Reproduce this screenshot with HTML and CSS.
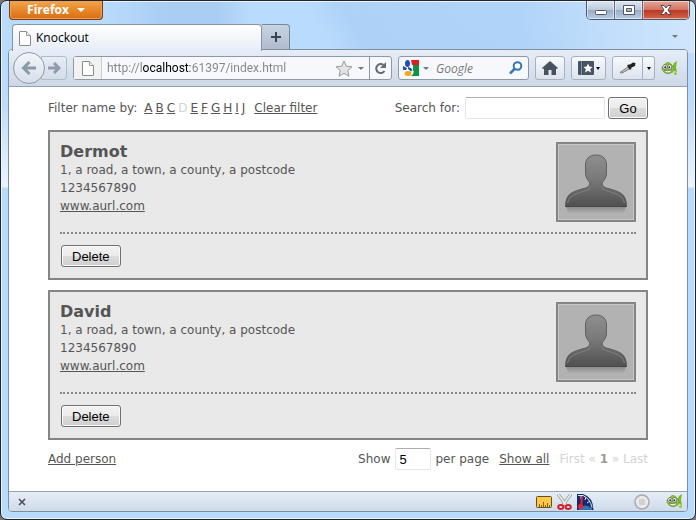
FILE: index.html
```
<!DOCTYPE html>
<html lang="en">
<head>
  <meta charset="utf-8">
  <title>Knockout</title>
  <link rel="stylesheet" href="styles.css">
</head>
<body>
  <!-- shared icons -->
  <svg class="defs" width="0" height="0">
    <defs>
      <linearGradient id="bodyFill" x1="0" y1="0" x2="0" y2="1">
        <stop offset="0" stop-color="#8f8f8f" />
        <stop offset="0.5" stop-color="#777" />
        <stop offset="1" stop-color="#505050" />
      </linearGradient>
      <linearGradient id="shadowFill" x1="0" y1="0" x2="0" y2="1">
        <stop offset="0" stop-color="#8c8c8c" />
        <stop offset="1" stop-color="#b2b2b2" />
      </linearGradient>
      <symbol id="page" viewBox="0 0 12 15">
        <path d="M1 .5h6.500l4 4V14q0 .5-.5.5H1q-.5 0-.5-.5V1q0-.5.5-.5z" fill="#fdfdfd" stroke="#8b8b8b" />
        <path d="M7.500.5v4h4" fill="#eee" stroke="#999" />
      </symbol>
      <symbol id="fish" viewBox="0 0 17 17">
        <path d="M11 7l2-4 3-2-1 6 1 5-3-1-2-2z" fill="#7cb82b" />
        <path d="M3 5q3-4 6-2l2 2q3 3 1 7-4 3-8 1-4-3-3-6z" fill="#8ecb35" stroke="#659c25" stroke-width=".6" />
        <path d="M3 10q4 2 8-.5Q10 13 7 13q-3 0-4-3z" fill="#fff" stroke="#4b6b2b" stroke-width=".6" />
        <circle cx="4" cy="7" r="2.300" fill="#fff" stroke="#555" stroke-width=".7" />
        <circle cx="8.500" cy="7" r="2.300" fill="#fff" stroke="#555" stroke-width=".7" />
        <circle cx="4.200" cy="7.200" r="1" fill="#222" />
        <circle cx="8.300" cy="7.200" r="1" fill="#222" />
        <circle cx="14.500" cy="13.500" r="1.500" fill="#8ecb35" />
      </symbol>
      <symbol id="person" viewBox="0 0 76 76">
        <path d="M8 63h60l-3 7H11z" fill="url(#shadowFill)" />
        <path d="M38 11c7 0 10.500 4 10.500 10v8c0 4-2 7-4 9-1 3 1 5 4 6 9 2.500 15 4 18 9 1.500 3 2 6 2 9.500H7.500c0-3.500.5-6.500 2-9.500 3-5 9-6.500 18-9 3-1 5-3 4-6-2-2-4-5-4-9v-8c0-6 3.500-10 10.500-10z" fill="url(#bodyFill)" stroke="#5f5f5f" />
        <path d="M9.500 59q1-5 6-8 6-3 13-4.500 3-1 4-3m11 0q1 2 4 3 7 1.500 13 4.500 5 3 6 8" fill="none" stroke="#808080" />
        <path d="M7 62.500h62" stroke="#484848" />
      </symbol>
    </defs>
  </svg>

  <div class="window">
    <div class="titlebar">
      <button class="firefox" type="button">Firefox <span class="caret caret-white"></span></button>
      <div class="window-buttons">
        <button class="win-btn" type="button" aria-label="Minimize">
          <svg width="14" height="14" viewBox="0 0 14 14"><rect x="1.500" y="7.500" width="11" height="4" rx="1" fill="#fff" stroke="#535666" /></svg>
        </button>
        <button class="win-btn" type="button" aria-label="Maximize">
          <svg width="14" height="14" viewBox="0 0 14 14"><path d="M1.500 2.500h11v9h-11zM4.500 5.500v3h5v-3z" fill="#fff" fill-rule="evenodd" stroke="#535666" /></svg>
        </button>
        <button class="win-btn win-close" type="button" aria-label="Close">
          <svg width="14" height="14" viewBox="0 0 14 14"><path d="M2 2.500h3l2 2.500 2-2.500h3L9 7l3 4.500H9L7 9l-2 2.500H2L5 7z" fill="#fff" stroke="#5b4650" /></svg>
        </button>
      </div>
    </div>

    <div class="tabs">
      <button class="tab" type="button"><svg width="12" height="15"><use href="#page" /></svg>Knockout</button>
      <button class="new-tab" type="button" aria-label="New tab">
        <svg width="10" height="10" viewBox="0 0 10 10"><path d="M5 0v10M0 5h10" stroke="#3b4450" stroke-width="2" /></svg>
      </button>
      <span class="caret tabs-caret"></span>
    </div>

    <div class="chrome">
      <div class="toolbar">
        <div class="nav">
          <button class="back" type="button" aria-label="Back">
            <svg width="16" height="14" viewBox="0 0 16 14"><path d="M8.500 1L2.500 7l6 6M3 7h12" fill="none" stroke="#8c99ab" stroke-width="3" /></svg>
          </button>
          <button class="forward" type="button" aria-label="Forward">
            <svg width="13" height="12" viewBox="0 0 13 12"><path d="M6 1l5 5-5 5M11 6H0" fill="none" stroke="#8f9cae" stroke-width="3" /></svg>
          </button>
        </div>

        <div class="field location">
          <span class="site"><svg width="12" height="15"><use href="#page" /></svg></span>
          <input class="url" type="text" aria-label="Address" value="http://localhost:61397/index.html">
          <svg width="18" height="17" viewBox="0 0 18 17"><path d="M9 1l2.300 5.200 5.700.6-4.200 3.800 1.200 5.600L9 13.300l-5 2.900 1.200-5.600L1 6.800l5.700-.6z" fill="#e4e4e6" stroke="#999" /></svg>
          <span class="caret"></span>
          <button class="reload" type="button" aria-label="Reload">
            <svg width="13" height="13" viewBox="0 0 13 13"><path d="M9.500 3A4.500 4.500 0 1 0 10.500 9" fill="none" stroke="#666c75" stroke-width="2" /><path d="M12 0v6H6z" fill="#666c75" /></svg>
          </button>
        </div>

        <div class="field search">
          <svg width="16" height="16" viewBox="0 0 16 16">
            <rect width="16" height="16" fill="#fff" />
            <path d="M8 0h8v5H9z" fill="#e11b22" />
            <path d="M10 5h6v11H8q4-3 2-6z" fill="#0b9444" />
            <path d="M0 6l4 2-1 2H0z" fill="#1d4fb4" />
            <ellipse cx="4.500" cy="3.500" rx="2.500" ry="3.500" fill="#1d4fb4" />
            <path d="M5 7l3 1q2 2 0 3.500L5 9z" fill="#1d4fb4" />
            <ellipse cx="5" cy="13.500" rx="3.500" ry="2.500" fill="#f5a81c" />
          </svg>
          <span class="caret"></span>
          <input class="engine" type="text" placeholder="Google" aria-label="Web search">
          <svg width="14" height="14" viewBox="0 0 14 14"><circle cx="8.500" cy="5" r="3.800" fill="#fff" stroke="#3677b5" stroke-width="2" /><path d="M5.500 8L1 12.500" stroke="#3677b5" stroke-width="2.500" /></svg>
        </div>

        <button class="tool" type="button" aria-label="Home">
          <svg width="16" height="14" viewBox="0 0 16 14"><path d="M8 0l8 7-1 1-1-.5V14H9.500V9h-3v5H2V7.500L1 8 0 7z" fill="#46525f" /></svg>
        </button>
        <button class="tool bookmarks" type="button" aria-label="Bookmarks">
          <svg width="16" height="14" viewBox="0 0 16 14"><rect width="16" height="14" rx="1" fill="#465563" /><path d="M3.500 0v14" stroke="#8591a0" /><path d="M10 2.500l1.400 3 3.200.4-2.400 2.200.7 3.300L10 9.800l-2.900 1.600.7-3.300-2.400-2.200 3.200-.4z" fill="#fff" /></svg>
          <span class="caret caret-small"></span>
        </button>
        <div class="split">
          <button class="tool picker" type="button" aria-label="Color picker">
            <svg width="17" height="12" viewBox="0 0 17 12"><path d="M1 10.500L9 5l2 1.500L3 11z" fill="#ccc" stroke="#777" /><path d="M8 3.500l1.500-1 1.500 0 3-2 2.500.5-.5 3-3.500 1.500-.5 2h-1.500z" fill="#222" /></svg>
          </button>
          <button class="tool more" type="button" aria-label="Color picker menu"><span class="caret caret-small"></span></button>
        </div>
        <svg width="17" height="17"><use href="#fish" /></svg>
      </div>

      <main class="page">
        <div class="filters">
          <div class="letters">
            <span class="letters-label">Filter name by:</span>
            <a href="#">A</a>
            <a href="#">B</a>
            <a href="#">C</a>
            <span class="disabled">D</span>
            <a href="#">E</a>
            <a href="#">F</a>
            <a href="#">G</a>
            <a href="#">H</a>
            <a href="#">I</a>
            <a href="#">J</a>
            <a class="clear" href="#">Clear filter</a>
          </div>
          <form class="search-form">
            <label for="term">Search for:</label>
            <input class="box term" type="text" id="term">
            <button class="btn" type="button">Go</button>
          </form>
        </div>

        <ul class="people">
          <li class="person">
            <div class="details">
              <div>
                <h2>Dermot</h2>
                <p>1, a road, a town, a county, a postcode</p>
                <p>1234567890</p>
                <p><a href="#">www.aurl.com</a></p>
              </div>
              <svg class="photo" viewBox="0 0 76 76"><use href="#person" /></svg>
            </div>
            <div class="tools"><button class="btn" type="button">Delete</button></div>
          </li>
          <li class="person">
            <div class="details">
              <div>
                <h2>David</h2>
                <p>1, a road, a town, a county, a postcode</p>
                <p>1234567890</p>
                <p><a href="#">www.aurl.com</a></p>
              </div>
              <svg class="photo" viewBox="0 0 76 76"><use href="#person" /></svg>
            </div>
            <div class="tools"><button class="btn" type="button">Delete</button></div>
          </li>
        </ul>

        <div class="paging">
          <a class="add" href="#">Add person</a>
          <label for="count">Show</label>
          <input class="box count" type="text" id="count" value="5">
          <span>per page</span>
          <a class="all" href="#">Show all</a>
          <div class="pages">First « <b>1</b> » Last</div>
        </div>
      </main>

      <div class="statusbar">
        <button class="close-bar" type="button" aria-label="Close bar">
          <svg width="8" height="8" viewBox="0 0 8 8"><path d="M1 1l6 6M7 1L1 7" stroke="#4a4d57" stroke-width="1.600" /></svg>
        </button>
        <svg width="16" height="12" viewBox="0 0 16 12"><rect x=".5" y=".5" width="15" height="11" rx="1" fill="#fbc94a" stroke="#6d4d10" /><path d="M3.500 11V8M5.500 11V9M7.500 11V6M9.500 11V9M11.500 11V7M13.500 11V9" stroke="#8a5f10" /></svg>
        <svg width="15" height="16" viewBox="0 0 15 16"><path d="M1 0l8 11M14 0L6 11" stroke="#999" stroke-width="3" /><path d="M1 0l8 11M14 0L6 11" stroke="#eee" stroke-width="1.500" /><ellipse cx="3.800" cy="13" rx="2.600" ry="2" fill="none" stroke="#d1222b" stroke-width="2" /><ellipse cx="11.200" cy="13" rx="2.600" ry="2" fill="none" stroke="#d1222b" stroke-width="2" /></svg>
        <svg width="17" height="16" viewBox="0 0 17 16"><path d="M0 0h6q10 3 10.500 16H0z" fill="#16296f" /><path d="M2 14q6-5 13 0v2H2z" fill="#2f78ad" /><path d="M1 1.500h5q7 3 9 12M4 2v3M9 3L8 6M13 7l-3 2" fill="none" stroke="#dfe6f5" /><path d="M5 3l-1 11" stroke="#e8232a" stroke-width="2" /><circle cx="3.500" cy="12.500" r="2.500" fill="#e8232a" /></svg>
        <svg class="stop" width="16" height="16" viewBox="0 0 16 16"><circle cx="8" cy="8" r="7" fill="#e8e9eb" stroke="#aaa" stroke-width="1.500" /><rect x="5" y="5" width="6" height="6" fill="#d2d2d2" /></svg>
        <svg width="17" height="17"><use href="#fish" /></svg>
      </div>
    </div>
  </div>
</body>
</html>
```
FILE: styles.css
```
* {
  box-sizing: border-box;
}

body {
  margin: 0;
  background: #77777b;
  font: 12px/18px "Open Sans", "Noto Sans", sans-serif;
}

button, input {
  margin: 0;
  padding: 0;
  font: inherit;
}

svg {
  display: block;
  flex: none;
}

.defs {
  position: absolute;
}

/* window frame */
.window {
  display: flex;
  flex-direction: column;
  min-height: 100vh;
  padding: 0 7px 7px;
  border: 1px solid #23232d;
  border-radius: 7px;
  box-shadow: inset 0 0 0 1px #e9f5ff;
  background:
    linear-gradient(60deg, transparent 46%, rgba(150, 190, 235, 0.3) 51%, transparent 85%) 0 0 / 100% 52px no-repeat,
    linear-gradient(to right, #b9dcfd, #b9dcfd 15%, #a9cdf3 24%, #a9cdf3 31%, #b9dcfd 36%, #b9dcfd 44%, #b3d6fa 75%, #d0e6fd) 0 0 / 100% 52px no-repeat,
    linear-gradient(#b9dcfd 50px, #bcdcfc 100px, #eaf4fe 186px, #b8dafb 187px);
}

.titlebar {
  display: flex;
  justify-content: space-between;
  align-items: flex-start;
  height: 23px;
}

.firefox {
  display: flex;
  align-items: center;
  justify-content: center;
  gap: 8px;
  width: 94px;
  height: 19px;
  margin-left: 1px;
  border: 1px solid #7c3c12;
  border-top: 0;
  border-radius: 0 0 4px 4px;
  background: linear-gradient(#f3a64c, #e8882b 50%, #d96c12);
  box-shadow: inset 0 0 0 1px #eda05a;
  color: #fff;
  font-weight: bold;
}

.caret {
  flex: none;
  border: 3px solid transparent;
  border-top-color: #777;
  border-bottom: 0;
}

.caret-white {
  border-width: 4px;
  border-top-color: #fff;
  border-bottom: 0;
}

.caret-small {
  border-width: 2px;
  border-top: 3px solid #000;
}

.window-buttons {
  display: flex;
  height: 19px;
  margin-right: -2px;
  border: 1px solid #4e5a6c;
  border-top: 0;
  border-radius: 0 0 5px 5px;
  overflow: hidden;
}

.win-btn {
  display: flex;
  align-items: center;
  justify-content: center;
  width: 28px;
  border: 0;
  border-right: 1px solid #5d6b80;
  background: linear-gradient(#dce7f3, #bccadb 48%, #98abc4 50%, #b6cde6);
  box-shadow: inset 0 0 0 1px rgba(255, 255, 255, 0.5);
}

.win-close {
  width: 46px;
  border-right: 0;
  background: linear-gradient(#e5a799, #d27562 48%, #b83820 50%, #d4654a);
}

/* tabs */
.tabs {
  display: flex;
  align-items: stretch;
  height: 25px;
  padding-left: 4px;
}

.tab {
  display: flex;
  align-items: center;
  gap: 5px;
  width: 250px;
  height: 27px;
  padding-left: 6px;
  border: 1px solid #8593a5;
  border-bottom: 0;
  border-radius: 4px 4px 0 0;
  background: linear-gradient(#fff, #e6edf7);
  color: #000;
  z-index: 1;
}

.new-tab {
  display: flex;
  align-items: center;
  justify-content: center;
  width: 28px;
  border: 1px solid #76869b;
  border-bottom: 0;
  border-left: 0;
  border-radius: 0 4px 0 0;
  background: linear-gradient(#c8d3e2, #b0bccd);
}

.tabs-caret {
  align-self: center;
  margin: 0 10px 0 auto;
}

/* toolbar */
.chrome {
  display: flex;
  flex: 1;
  flex-direction: column;
  border: 1px solid #7e8da0;
  border-radius: 4px;
  background: #fff;
  overflow: hidden;
}

.toolbar {
  display: flex;
  align-items: center;
  gap: 6px;
  height: 37px;
  padding: 0 9px 0 4px;
  border-bottom: 1px solid #96a1b0;
  background: linear-gradient(#e6edf7, #cdd8e8);
}

.nav {
  display: flex;
  align-items: center;
  width: 54px;
}

.back {
  display: flex;
  align-items: center;
  justify-content: center;
  flex: none;
  width: 32px;
  height: 32px;
  border: 1px solid #8f99a6;
  border-radius: 50%;
  background: linear-gradient(#f3f5f9, #d7dfea);
  z-index: 1;
}

.forward {
  display: flex;
  align-items: center;
  justify-content: center;
  flex: 1;
  height: 24px;
  margin-left: -4px;
  border: 1px solid #b1bccb;
  border-radius: 0 3px 3px 0;
  background: linear-gradient(#e7ecf4, #d4dde9);
}

.field {
  display: flex;
  align-items: center;
  height: 24px;
  border: 1px solid #8e98a7;
  border-radius: 3px;
  background: #f6f8fc;
}

.location {
  flex: 1;
  gap: 5px;
  min-width: 0;
}

.site {
  display: flex;
  align-items: center;
  justify-content: center;
  align-self: stretch;
  width: 28px;
  border-right: 1px solid #ccc;
  background: #f2f2f3;
}

.url,
.engine {
  flex: 1;
  min-width: 0;
  height: 22px;
  border: 0;
  background: none;
}

/* host part of the address is darker than the rest */
.url {
  background: linear-gradient(to right, #858585 35px, #000 35px 83px, #858585 83px);
  background-clip: text;
  -webkit-background-clip: text;
  color: transparent;
  font-family: Roboto, "Open Sans", sans-serif;
}

.reload {
  display: flex;
  align-items: center;
  justify-content: center;
  align-self: stretch;
  width: 22px;
  border: 0;
  border-left: 1px solid #8e98a7;
  background: none;
}

.search {
  gap: 4px;
  width: 131px;
  padding: 0 5px 0 4px;
}

.engine {
  padding-left: 3px;
}

.engine::placeholder {
  color: #7a7a7a;
  font-style: italic;
}

.tool {
  display: flex;
  align-items: center;
  justify-content: center;
  gap: 2px;
  width: 30px;
  height: 24px;
  border: 1px solid #a6b0be;
  border-radius: 3px;
  background: linear-gradient(#f8fafc, #dce3ed);
}

.bookmarks {
  width: 35px;
}

.split {
  display: flex;
}

.picker {
  width: 31px;
  border-radius: 3px 0 0 3px;
}

.more {
  width: 12px;
  border-left: 0;
  border-radius: 0 3px 3px 0;
}

/* page */
.page {
  flex: 1;
  padding: 10px 39px;
  color: #555;
  font: 12px/18px "DejaVu Sans", Verdana, sans-serif;
}

.page a {
  color: #555;
}

.filters,
.search-form,
.paging {
  display: flex;
  align-items: center;
}

.filters {
  justify-content: space-between;
  height: 22px;
}

.letters {
  display: flex;
  gap: 3px;
}

.letters-label {
  margin-right: 4px;
}

.letters .clear {
  margin-left: 6px;
}

.disabled,
.pages {
  color: #d3d3d3;
}

.box {
  height: 22px;
  border: 1px solid #e3e6eb;
  border-top-color: #abadb3;
  border-radius: 2px;
  background: #fff;
  color: #000;
  font: 13px "Liberation Sans", Arial, sans-serif;
}

.term {
  width: 140px;
  margin: 0 3px 0 5px;
}

.btn {
  min-width: 40px;
  height: 22px;
  padding: 0 10px;
  border: 1px solid #707070;
  border-radius: 3px;
  background: linear-gradient(#f2f2f2, #ebebeb 50%, #ddd 50%, #cfcfcf);
  box-shadow: inset 0 0 0 1px #fafafa;
  color: #000;
  font: 13px "Liberation Sans", Arial, sans-serif;
}

.people {
  margin: 11px 0 8px;
  padding: 0;
  list-style: none;
}

.person {
  margin-bottom: 10px;
  padding: 10px 10px 11px;
  border: 2px solid #858585;
  background: #e9e9e9;
}

.person:last-child {
  margin-bottom: 0;
}

.details {
  display: flex;
  justify-content: space-between;
}

.person h2 {
  margin: 0;
  font-size: 16px;
  line-height: 19px;
}

.person p {
  margin: 0;
}

.photo {
  width: 80px;
  height: 80px;
  border: 2px solid #858585;
  background: #b2b2b2;
  box-shadow: inset 0 0 0 1px #c8c8c8;
}

.tools {
  display: flex;
  margin-top: 10px;
  padding: 11px 1px 0;
  border-top: 2px dotted #858585;
}

.paging {
  height: 22px;
}

.add {
  margin-right: auto;
}

.count {
  width: 36px;
  margin: 0 5px 0 4px;
  padding-left: 4px;
}

.all {
  margin: 0 10px;
}

.pages b {
  color: #999;
}

/* status bar */
.statusbar {
  display: flex;
  align-items: center;
  gap: 5px;
  height: 20px;
  padding: 0 4px 0 9px;
  border-top: 1px solid #96a1b0;
  background: linear-gradient(#e6edf6, #cfdbea);
}

.close-bar {
  margin-right: auto;
  border: 0;
  background: none;
}

.stop {
  margin: 0 11px 0 35px;
}
```
